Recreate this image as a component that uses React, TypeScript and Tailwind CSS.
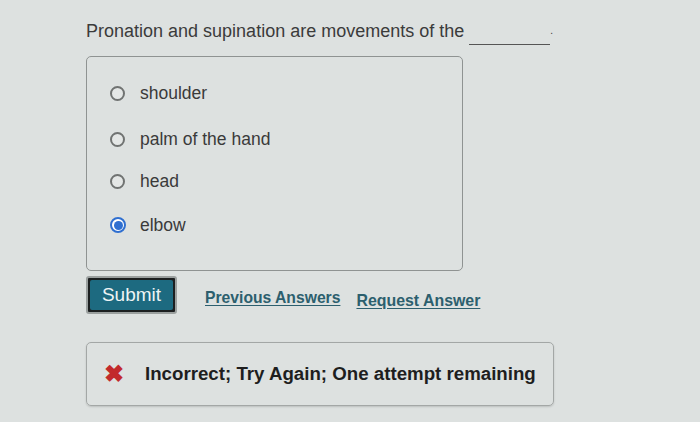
import React, { useState } from "react";

const options = ["shoulder", "palm of the hand", "head", "elbow"];

// row spacing between the answer choices
const rowGaps = ["mt-0", "mt-[26px]", "mt-[22px]", "mt-[24px]"];

const Radio = ({ checked }: { checked: boolean }) =>
  checked ? (
    <span className="flex h-[16px] w-[16px] items-center justify-center rounded-full border-2 border-[#2f6fd0] bg-white">
      <span className="h-[9px] w-[9px] rounded-full bg-[#2f6fd0]" />
    </span>
  ) : (
    <span className="h-[15px] w-[15px] rounded-full border-2 border-[#707372] bg-[#e4e7e6]" />
  );

const App = () => {
  const [selected, setSelected] = useState("elbow");

  return (
    <div
      className="h-[422px] w-[700px] overflow-hidden bg-[#dde1e0] pl-[86px] pt-[19px] text-[#333]"
      style={{ fontFamily: '"Liberation Sans", Arial, sans-serif' }}
    >
      {/* Question */}
      <div className="flex items-end text-[18px] leading-[24px] text-[#3b3b3b]">
        <span>Pronation and supination are movements of the</span>
        <span className="mb-[-2px] ml-[5px] w-[81px] border-b border-[#555]" />
        <span className="text-[10px]">.</span>
      </div>

      {/* Answer choices */}
      <div className="mt-[13px] h-[215px] w-[377px] rounded-[5px] border border-[#8f9392] pl-[23px] pt-[26px]">
        {options.map((opt, i) => (
          <label
            key={opt}
            onClick={() => setSelected(opt)}
            className={`${rowGaps[i]} flex cursor-pointer items-center text-[17.5px] leading-[20px] text-[#3a3a3a]`}
          >
            <span className="flex w-[30px] items-center">
              <Radio checked={selected === opt} />
            </span>
            <span>{opt}</span>
          </label>
        ))}
      </div>

      {/* Actions */}
      <div className="mt-[5px] flex items-center">
        <button className="rounded-[3px] border-2 border-[#9ba09f] bg-[#1c1f20] p-[2px]">
          <span className="block h-[30px] w-[83px] rounded-[2px] bg-[#1d6a80] text-[19px] leading-[30px] text-[#eef4f4]">
            Submit
          </span>
        </button>
        <a className="ml-[28px] mt-[6px] cursor-pointer text-[15.7px] font-bold text-[#2c5f6e] underline underline-offset-2">
          Previous Answers
        </a>
        <a className="ml-[16px] mt-[12px] cursor-pointer text-[15.9px] font-bold text-[#2c5f6e] underline underline-offset-2">
          Request Answer
        </a>
      </div>

      {/* Feedback */}
      <div className="mt-[28px] flex h-[64px] w-[468px] items-center rounded-[5px] border border-[#a3a7a6] pl-[17px] shadow-[0_1px_2px_rgba(0,0,0,0.15)]">
        <span className="text-[24px] font-bold leading-none text-[#c22a2c]">✖</span>
        <span className="ml-[21px] text-[18.7px] font-bold text-[#1e1e1e]">
          Incorrect; Try Again; One attempt remaining
        </span>
      </div>
    </div>
  );
};

export default App;
